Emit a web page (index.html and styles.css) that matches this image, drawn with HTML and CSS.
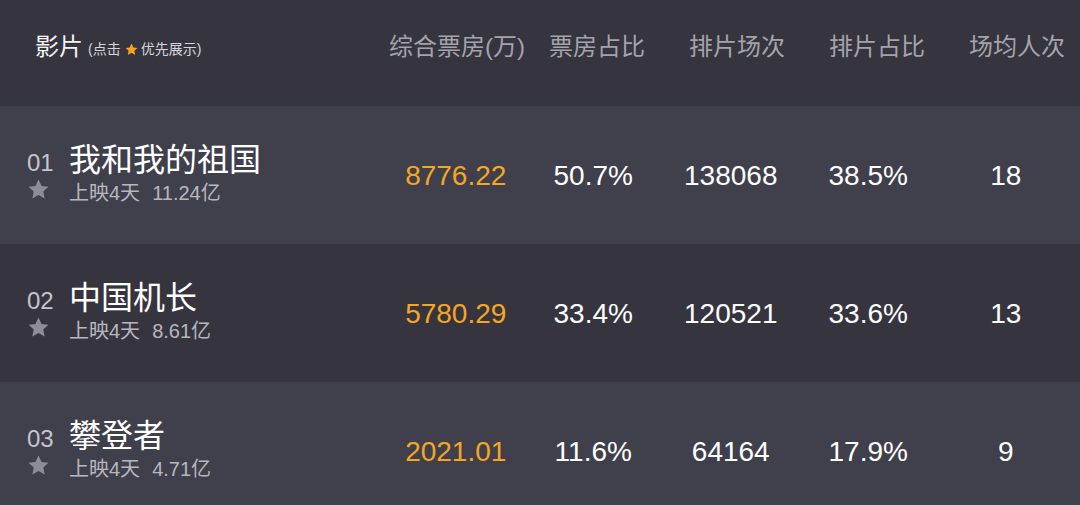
FILE: index.html
```html
<!DOCTYPE html>
<html lang="zh">
<head>
<meta charset="utf-8">
<link rel="stylesheet" href="styles.css">
</head>
<body>
<div class="board">
  <div class="head">
    <div class="head-film">
      <span class="head-title">影片</span>
      <span class="head-note">(点击<svg class="star-o" viewBox="0 0 24 24"><path d="M12 2.5l2.9 6.1 6.6.8-4.9 4.6 1.3 6.6L12 17.3l-5.9 3.3 1.3-6.6-4.9-4.6 6.6-.8z"/></svg>优先展示)</span>
    </div>
    <div class="head-col">综合票房(万)</div>
    <div class="head-col">票房占比</div>
    <div class="head-col">排片场次</div>
    <div class="head-col">排片占比</div>
    <div class="head-col">场均人次</div>
  </div>

  <div class="row light">
    <div class="film">
      <div class="line1"><span class="rank">01</span><span class="title">我和我的祖国</span></div>
      <div class="line2"><svg class="star-g" viewBox="0 0 24 24"><path d="M12 2.5l2.9 6.1 6.6.8-4.9 4.6 1.3 6.6L12 17.3l-5.9 3.3 1.3-6.6-4.9-4.6 6.6-.8z"/></svg><span class="sub">上映4天<span class="gross">11.24亿</span></span></div>
    </div>
    <div class="cell box">8776.22</div>
    <div class="cell">50.7%</div>
    <div class="cell">138068</div>
    <div class="cell">38.5%</div>
    <div class="cell">18</div>
  </div>

  <div class="row dark">
    <div class="film">
      <div class="line1"><span class="rank">02</span><span class="title">中国机长</span></div>
      <div class="line2"><svg class="star-g" viewBox="0 0 24 24"><path d="M12 2.5l2.9 6.1 6.6.8-4.9 4.6 1.3 6.6L12 17.3l-5.9 3.3 1.3-6.6-4.9-4.6 6.6-.8z"/></svg><span class="sub">上映4天<span class="gross">8.61亿</span></span></div>
    </div>
    <div class="cell box">5780.29</div>
    <div class="cell">33.4%</div>
    <div class="cell">120521</div>
    <div class="cell">33.6%</div>
    <div class="cell">13</div>
  </div>

  <div class="row light">
    <div class="film">
      <div class="line1"><span class="rank">03</span><span class="title">攀登者</span></div>
      <div class="line2"><svg class="star-g" viewBox="0 0 24 24"><path d="M12 2.5l2.9 6.1 6.6.8-4.9 4.6 1.3 6.6L12 17.3l-5.9 3.3 1.3-6.6-4.9-4.6 6.6-.8z"/></svg><span class="sub">上映4天<span class="gross">4.71亿</span></span></div>
    </div>
    <div class="cell box">2021.01</div>
    <div class="cell">11.6%</div>
    <div class="cell">64164</div>
    <div class="cell">17.9%</div>
    <div class="cell">9</div>
  </div>
</div>
</body>
</html>
```

FILE: styles.css
```css
html, body {
  margin: 0;
  padding: 0;
  background: #36353f;
}
body {
  width: 1080px;
  height: 505px;
  overflow: hidden;
  font-family: "Liberation Sans", "Noto Sans CJK SC", sans-serif;
}
.board {
  width: 1100px;
}
.head {
  height: 106px;
  box-sizing: border-box;
  padding-bottom: 12px;
  display: grid;
  grid-template-columns: 387px repeat(5, 140px);
  align-items: center;
  background: #36353f;
}
.head-film {
  padding-left: 35px;
  display: flex;
  align-items: center;
}
.head-title {
  font-size: 24px;
  line-height: 30px;
  color: #f2f2f4;
}
.head-note {
  margin-left: 5px;
  margin-top: 3px;
  font-size: 14px;
  line-height: 18px;
  color: #d6d5db;
  display: flex;
  align-items: center;
}
.star-o {
  width: 15px;
  height: 15px;
  fill: #f5a623;
  margin: 2px 2px 0 3px;
}
.head-col {
  text-align: center;
  font-size: 24px;
  line-height: 30px;
  color: #a4a3ab;
}
.row {
  height: 138px;
  display: grid;
  grid-template-columns: 387px repeat(5, 137.5px);
  align-items: center;
}
.light { background: #403f4c; }
.dark { background: #36353f; }
.film {
  padding-left: 27px;
  margin-top: -4px;
}
.line1 {
  display: flex;
  align-items: baseline;
}
.rank {
  width: 42px;
  font-size: 24px;
  color: #c6c5cc;
}
.title {
  font-size: 32px;
  line-height: 36px;
  color: #ffffff;
}
.line2 {
  display: flex;
  align-items: center;
  margin-top: 3px;
}
.star-g {
  width: 25px;
  height: 25px;
  fill: #8e8d97;
  margin-left: -1px;
  margin-right: 18px;
  margin-top: -6px;
}
.sub {
  font-size: 20px;
  line-height: 24px;
  color: #b8b7bf;
}
.gross {
  margin-left: 12px;
}
.cell {
  text-align: center;
  font-size: 28px;
  line-height: 32px;
  color: #ffffff;
  padding-top: 2px;
}
.cell.box {
  color: #f5a623;
}
```
